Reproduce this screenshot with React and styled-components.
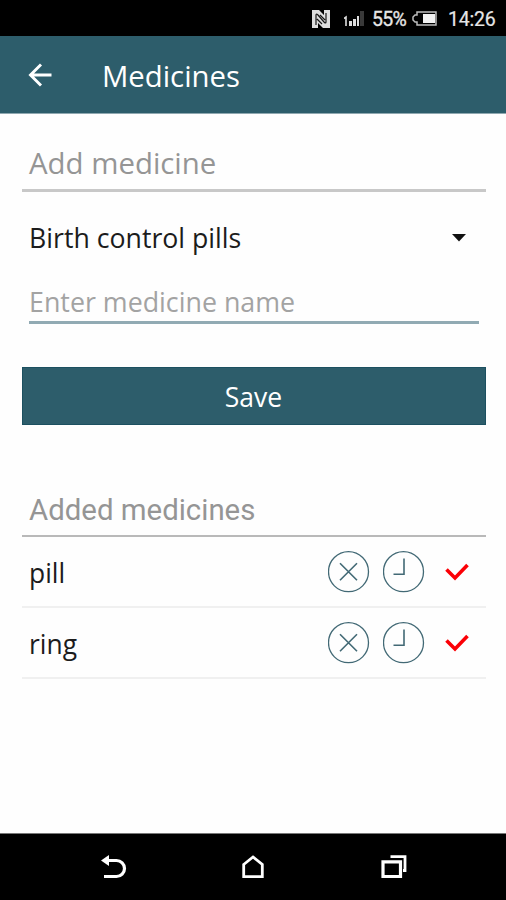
import styled, { createGlobalStyle } from "styled-components";

const GlobalStyle = createGlobalStyle`
    * {
        box-sizing: border-box;
    }

    body {
        margin: 0;
        background: #fff;
        font-family: "Open Sans", "Noto Sans", sans-serif;
    }
`;

const Screen = styled.div`
    width: 506px;
    height: 900px;
    display: flex;
    flex-direction: column;
    background: #fefefe;
    overflow: hidden;
`;

const StatusBar = styled.div`
    height: 36px;
    flex-shrink: 0;
    padding: 2px 10px 0 0;
    display: flex;
    align-items: center;
    justify-content: flex-end;
    background: #000;
    color: #e6e6e6;
    font-family: Roboto, sans-serif;
    font-size: 19.5px;
    line-height: 34px;

    svg {
        display: block;
        flex-shrink: 0;
    }
`;

const NfcSlot = styled.span`
    margin: -1px 14px 0 0;
`;

const Percent = styled.span`
    width: 35px;
    margin: 1px 5px 0 7px;
    font-size: 19.5px;
    letter-spacing: -0.7px;
    white-space: nowrap;
    -webkit-text-stroke: 0.3px #e6e6e6;
`;

const BatterySlot = styled.span`
    margin-top: -2px;
`;

const Clock = styled.span`
    width: 48px;
    margin: 1px 0 0 11px;
    letter-spacing: -0.2px;
    -webkit-text-stroke: 0.2px #e6e6e6;
`;

const Header = styled.header`
    height: 78px;
    flex-shrink: 0;
    padding-left: 28px;
    display: flex;
    align-items: center;
    background: #2d5d6b;
    border-bottom: 1px solid #8fa8b0;
    color: #fff;
`;

const Title = styled.h1`
    margin: 3px 0 0 50px;
    font-size: 29.3px;
    font-weight: 400;
    line-height: 40px;
`;

const Content = styled.main`
    flex: 1;
    padding: 0 20px 0 22px;
`;

const SectionTitle = styled.h2`
    height: ${({ $height }) => $height}px;
    margin: 0;
    padding: 0 0 ${({ $bottom }) => $bottom}px 7px;
    display: flex;
    align-items: flex-end;
    border-bottom: ${({ $line }) => $line};
    color: #959595;
    font-family: ${({ $font }) => $font};
    font-size: ${({ $size }) => $size}px;
    font-weight: 400;
    line-height: 40px;
`;

const Select = styled.div`
    height: 93px;
    padding: 0 20px 2px 7px;
    display: flex;
    align-items: center;
    justify-content: space-between;
    color: #1c1c1c;
    font-size: 26.7px;
`;

const NameField = styled.div`
    height: 39px;
    margin: 0 7px 43px;
    border-bottom: 3px solid #91aab3;
    color: #a3a3a3;
    font-size: 26.8px;
    line-height: 34px;
`;

const SaveButton = styled.button`
    width: 100%;
    height: 58px;
    padding: 1px 1px 0 0;
    display: block;
    border: 1px solid #1c5060;
    border-radius: 0;
    background: #2d5d6b;
    color: #fff;
    font-family: inherit;
    font-size: 26.5px;
`;

const Row = styled.div`
    height: 71px;
    padding: 0 17px 0 7px;
    display: flex;
    align-items: center;
    border-bottom: 2px solid #f0f0f0;
    color: #1c1c1c;
    font-size: 26.4px;

    svg {
        display: block;
    }
`;

const MedicineName = styled.span`
    flex: 1;
    padding-top: 2px;
`;

const Actions = styled.div`
    display: flex;
    align-items: center;
    gap: 13px;

    svg:last-child {
        margin-left: 7px;
    }
`;

const NavBar = styled.nav`
    height: 67px;
    flex-shrink: 0;
    padding: 0 99px 0 101px;
    display: flex;
    align-items: center;
    justify-content: space-between;
    background: #000;
    border-top: 1px solid #777;
`;

const NfcIcon = () => (
    <svg width="18" height="18" viewBox="0 0 18 18">
        <path d="M0 0H7L12 5V0H18V18H11L6 13V18H0Z" fill="#dedede" />
        <path d="M4 15V5Q4 3 6 5L12 12Q14 14 14 12V3M8 5L13 10M5 9L10 14" fill="none" stroke="#171717" strokeWidth="1.2" />
    </svg>
);

const SignalIcon = () => (
    <svg width="21" height="16" viewBox="0 0 21 16">
        <path d="M0 7.5L2 6V15" fill="none" stroke="#ddd" strokeWidth="1.6" />
        <path d="M5 10H8V15H5ZM9 8H12V15H9ZM13 5H15V15H13Z" fill="#ddd" />
        <path d="M16 0H20V15H16Z" fill="#393939" />
    </svg>
);

const BatteryIcon = () => (
    <svg width="25" height="15" viewBox="0 0 25 15">
        <path d="M5 1H24V14H5V11H3L1 9V6L3 4H5Z" fill="none" stroke="#bdbdbd" strokeWidth="1.5" />
        <path d="M11 3H23V12H11Z" fill="#f2f2f2" />
    </svg>
);

const ArrowIcon = () => (
    <svg width="24" height="24" viewBox="0 0 24 24" fill="none" stroke="#fff" strokeWidth="2.9">
        <path d="M13 1.5L2.5 12L13 22.5M3 12H23.5" />
    </svg>
);

const CrossIcon = () => (
    <svg width="42" height="42" viewBox="0 0 42 42" fill="none" stroke="#426975" strokeWidth="1.3">
        <circle cx="20.5" cy="20.7" r="20" />
        <path d="M12 12.2L29 29.2M29 12.2L12 29.2" strokeWidth="1.6" />
    </svg>
);

const ClockIcon = () => (
    <svg width="42" height="42" viewBox="0 0 42 42" fill="none" stroke="#426975" strokeWidth="1.3">
        <circle cx="20.5" cy="20.7" r="20" />
        <path d="M21 7.5V23.3H10.5" strokeWidth="1.6" />
    </svg>
);

const CheckIcon = () => (
    <svg width="24" height="18" viewBox="0 0 24 18">
        <path d="M1.5 6.5L10 15L22.5 2" fill="none" stroke="#fb0006" strokeWidth="3.6" />
    </svg>
);

const BackIcon = () => (
    <svg width="26" height="24" viewBox="0 0 26 24">
        <path d="M0 5.5L8 0V11Z" fill="#fff" />
        <path d="M7 5.5H15.5A8 8 0 0 1 15.5 21.5H3" fill="none" stroke="#fff" strokeWidth="3.2" />
    </svg>
);

const HomeIcon = () => (
    <svg width="24" height="24" viewBox="0 0 24 24">
        <path d="M1.7 9.5L11 2L20.3 9.5V21.7H1.7Z" fill="none" stroke="#fff" strokeWidth="2.8" />
    </svg>
);

const RecentIcon = () => (
    <svg width="26" height="24" viewBox="0 0 26 24" fill="none" stroke="#fff">
        <path d="M2 6.8H19.5V21.5H2Z" strokeWidth="3.2" />
        <path d="M9.5 1.7H24V15.5H22" strokeWidth="2.8" />
    </svg>
);

const medicines = ["pill", "ring"];

const App = () => {

    return (
        <Screen>
            <GlobalStyle />

            <StatusBar>
                <NfcSlot><NfcIcon /></NfcSlot>
                <SignalIcon />
                <Percent>55%</Percent>
                <BatterySlot><BatteryIcon /></BatterySlot>
                <Clock>14:26</Clock>
            </StatusBar>

            <Header>
                <ArrowIcon />
                <Title>Medicines</Title>
            </Header>

            <Content>
                <SectionTitle $height={78} $bottom={6} $line="3px solid #c8c8c8" $font="inherit" $size={29.4}>
                    Add medicine
                </SectionTitle>

                <Select>
                    Birth control pills
                    <svg width="14" height="8" viewBox="0 0 14 8">
                        <path d="M0 0H14L7 7.5Z" fill="#111" />
                    </svg>
                </Select>

                <NameField>Enter medicine name</NameField>

                <SaveButton type="button">Save</SaveButton>

                <SectionTitle $height={112} $bottom={5} $line="2px solid #b9b9b9" $font="Roboto, sans-serif" $size={29.4}>
                    Added medicines
                </SectionTitle>

                {medicines.map((name) => (
                    <Row key={name}>
                        <MedicineName>{name}</MedicineName>
                        <Actions>
                            <CrossIcon />
                            <ClockIcon />
                            <CheckIcon />
                        </Actions>
                    </Row>
                ))}
            </Content>

            <NavBar>
                <BackIcon />
                <HomeIcon />
                <RecentIcon />
            </NavBar>
        </Screen>
    )
}


export default App;
